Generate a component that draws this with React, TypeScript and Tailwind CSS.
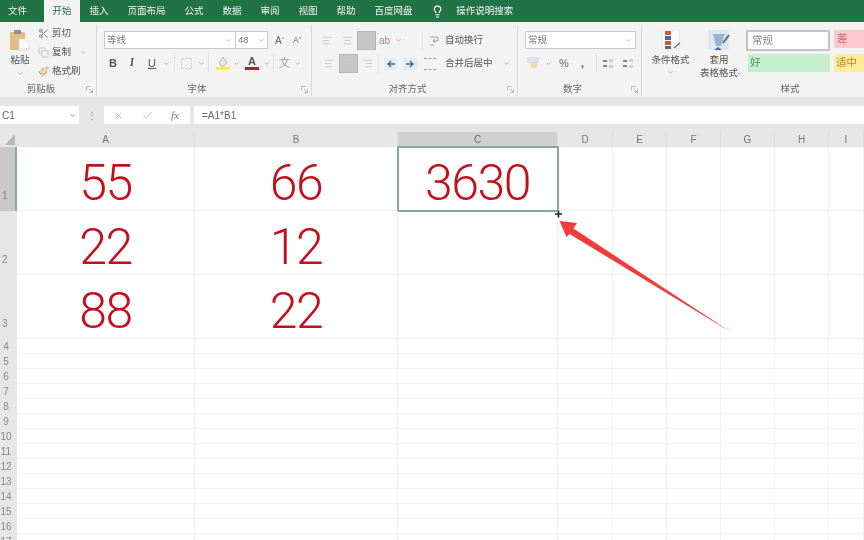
import { Scissors, Copy, Paintbrush, Lightbulb, X, Check, ChevronDown, AlignCenter, AlignLeft, AlignRight } from 'lucide-react';

const sans = "font-['Liberation_Sans','Noto_Sans_CJK_SC',sans-serif]";

const tabs = ['插入', '页面布局', '公式', '数据', '审阅', '视图', '帮助', '百度网盘'];
const columns = [
  { name: 'A', width: 'w-[178px]' },
  { name: 'B', width: 'w-[203px]' },
  { name: 'C', width: 'w-[160px]' },
  { name: 'D', width: 'w-[55px]' },
  { name: 'E', width: 'w-[54px]' },
  { name: 'F', width: 'w-[54px]' },
  { name: 'G', width: 'w-[54px]' },
  { name: 'H', width: 'w-[54px]' },
  { name: 'I', width: 'w-[35px]' },
];
const bigRows = [
  ['55', '66', '3630'],
  ['22', '12', ''],
  ['88', '22', ''],
];
const smallRows = [4, 5, 6, 7, 8, 9, 10, 11, 12, 13, 14, 15, 16, 17];

function Caret({ className = '' }: { className?: string }) {
  return <ChevronDown size={7} strokeWidth={2} className={`text-[#8a8a8a] shrink-0 ${className}`} />;
}

function Launcher() {
  return (
    <svg width="7" height="7" viewBox="0 0 7 7" className="absolute right-[3px] bottom-[3px]">
      <path d="M0.5 0.5h4M0.500 0.5v4M3 3l3.5 3.5M6.5 3.5v3h-3" stroke="#a6a6a6" strokeWidth="0.8" fill="none" />
    </svg>
  );
}

function Group({ label, width, children }: { label: string; width: string; children: React.ReactNode }) {
  return (
    <div className={`relative flex flex-col h-[71px] border-r border-[#d8d8d8] shrink-0 ${width}`}>
      <div className="flex-1 min-h-0">{children}</div>
      <div className="h-[14px] pr-[14px] text-center text-[9.5px] leading-[14px] text-[#666]">{label}</div>
      <Launcher />
    </div>
  );
}

function Sep() {
  return <div className="w-px h-[18px] bg-[#e0e0e0] shrink-0" />;
}

function LinesIcon({ selected = false, align = 'c' }: { selected?: boolean; align?: 'l' | 'c' | 'r' }) {
  const Icon = align === 'l' ? AlignLeft : align === 'r' ? AlignRight : AlignCenter;
  return (
    <div className={`w-[19px] h-[19px] flex items-center justify-center shrink-0 ${selected ? 'bg-[#c6c6c6] border border-[#b4b4b4]' : ''}`}>
      <Icon size={11} strokeWidth={2} className="text-[#c8c8c8]" />
    </div>
  );
}

function Ribbon() {
  return (
    <div className="flex h-[75px] pt-[3px] bg-[#f3f3f3] text-[#555] text-[9.5px]">
      <Group label="剪贴板" width="w-[97px]">
        <div className="flex pl-[8px] pt-px">
          <div className="w-[24px] flex flex-col items-center pt-[3px]">
            <svg width="22" height="22" viewBox="0 0 22 22">
              <rect x="1" y="3" width="15" height="18" rx="1" fill="#e2bd80" />
              <rect x="5" y="1" width="7" height="4" fill="#8d8d8d" />
              <path d="M10 10h6l4 4v7H10z" fill="#fafafa" stroke="#d2d2d2" strokeWidth="0.6" />
            </svg>
            <div className="leading-[14px] mt-[2px] text-[#555]">粘贴</div>
            <Caret className="mt-[3px]" />
          </div>
          <div className="ml-[6px] flex flex-col gap-[5px] leading-[14px]">
            <div className="flex items-center gap-[3px]"><Scissors size={11} className="text-[#6f7f99]" />剪切</div>
            <div className="flex items-center gap-[3px]"><Copy size={11} className="text-[#b5c6d8]" />复制<Caret className="ml-[6px]" /></div>
            <div className="flex items-center gap-[3px]"><Paintbrush size={11} className="text-[#d09a3c]" />格式刷</div>
          </div>
        </div>
      </Group>

      <Group label="字体" width="w-[215px]">
        <div className="flex items-center pl-[7px] pt-[6px]">
          <div className="w-[132px] h-[18px] bg-white border border-[#c8c8c8] flex items-center justify-between px-[2px] text-[#777]">等线<Caret className="mr-px" /></div>
          <div className="w-[32px] h-[18px] bg-white border border-l-0 border-[#c8c8c8] flex items-center justify-between px-[2px] text-[#777]">48<Caret /></div>
          <span className="ml-[7px] text-[10px] text-[#666]">A<sup className="text-[5px]">^</sup></span>
          <span className="ml-[9px] text-[8.5px] text-[#666]">A<sup className="text-[5px]">˅</sup></span>
        </div>
        <div className="flex items-center pl-[12px] mt-[5px] h-[18px]">
          <span className="w-[21px] text-[11px] font-bold text-[#555]">B</span>
          <span className="w-[18px] text-[11px] italic font-serif font-bold text-[#555]">I</span>
          <span className="w-[15px] text-[11px] underline text-[#555]">U</span>
          <Caret className="mr-[4px]" />
          <Sep />
          <div className="ml-[6px] w-[11px] h-[11px] border border-dashed border-[#d4d4d4] shrink-0" />
          <Caret className="ml-[6px] mr-[3px]" />
          <Sep />
          <div className="ml-[6px] w-[15px] flex flex-col items-center shrink-0">
            <svg width="12" height="10" viewBox="0 0 12 10"><path d="M6 0l4 6-3 3H4L2 6z" fill="#e4e4e4" stroke="#a9a9a9" strokeWidth="0.7" /></svg>
            <div className="w-[14px] h-[3px] bg-[#f6ee3c]" />
          </div>
          <Caret className="ml-[3px] mr-[5px]" />
          <div className="w-[14px] flex flex-col items-center shrink-0">
            <span className="text-[11px] leading-[11px] font-bold text-[#555]">A</span>
            <div className="w-[14px] h-[3px] bg-[#c8141e]" />
          </div>
          <Caret className="ml-[4px] mr-[3px]" />
          <Sep />
          <span className="ml-[5px] text-[11px] text-[#7fa3c4]">文</span>
          <Caret className="ml-[4px]" />
        </div>
      </Group>

      <Group label="对齐方式" width="w-[206px]">
        <div className="flex pt-[6px] h-[25px] items-center pl-[6px]">
          <LinesIcon align="l" />
          <div className="ml-px"><LinesIcon /></div>
          <LinesIcon selected />
          <span className="ml-[3px] w-[14px] text-[10px] text-[#a08a9a]">ab</span>
          <Caret className="ml-[2px]" />
          <div className="ml-[20px]"><Sep /></div>
          <svg className="ml-[6px]" width="11" height="12" viewBox="0 0 11 12"><path d="M1 2h8v4H4M4 6l2-2M4 6l2 2M1 10h4" stroke="#9a9a9a" fill="none" /></svg>
          <span className="ml-[5px] text-[#555]">自动换行</span>
        </div>
        <div className="flex mt-[4px] h-[19px] items-center pl-[8px]">
          <LinesIcon align="l" />
          <LinesIcon selected />
          <LinesIcon align="r" />
          <div className="ml-px"><Sep /></div>
          <svg className="ml-[5px]" width="14" height="12" viewBox="0 0 14 12"><rect width="14" height="12" fill="#e4edf5" /><path d="M11 6H4M7 3L4 6l3 3" stroke="#3a6a9c" strokeWidth="1.4" fill="none" /></svg>
          <svg className="ml-[5px]" width="14" height="12" viewBox="0 0 14 12"><rect width="14" height="12" fill="#e4edf5" /><path d="M3 6h7M7 3l3 3-3 3" stroke="#3a6a9c" strokeWidth="1.4" fill="none" /></svg>
          <div className="ml-[7px] shrink-0 w-[12px] h-[12px] border-y border-dashed border-[#9a9a9a]" />
          <span className="ml-[9px] text-[#555] whitespace-nowrap">合并后居中</span>
          <Caret className="ml-[10px]" />
        </div>
      </Group>

      <Group label="数字" width="w-[124px]">
        <div className="pl-[7px] pt-[6px]">
          <div className="w-[111px] h-[18px] bg-white border border-[#c8c8c8] flex items-center justify-between px-[2px] text-[#777]">常规<Caret className="mr-px" /></div>
        </div>
        <div className="flex items-center pl-[9px] mt-[5px] h-[18px]">
          <svg width="13" height="12" viewBox="0 0 13 12"><rect x="0" y="0" width="12" height="6" fill="#d7e5f2" /><circle cx="7" cy="8" r="3.5" fill="#efd6ae" /></svg>
          <Caret className="ml-[5px]" />
          <span className="ml-[7px] w-[16px] text-[11px] text-[#666]">%</span>
          <span className="ml-[6px] w-[15px] text-[11px] font-bold text-[#555]">,</span>
          <Sep />
          <svg className="ml-[5px]" width="12" height="11" viewBox="0 0 12 11"><path d="M1 3h4M1 8h4" stroke="#3a6a9c" strokeWidth="1.6" /><path d="M7 1h4v3H7zM7 7h4v3H7z" fill="#d0d0d0" /></svg>
          <svg className="ml-[8px]" width="12" height="11" viewBox="0 0 12 11"><path d="M1 3h4M1 8h4" stroke="#3a6a9c" strokeWidth="1.6" /><path d="M7 1h4v3H7zM7 7h4v3H7z" fill="#d0d0d0" /></svg>
        </div>
      </Group>

      <div className="relative flex-1 flex flex-col h-[71px] min-w-0 overflow-hidden">
        <div className="flex flex-1 min-h-0">
          <div className="w-[53px] ml-[2px] flex flex-col items-center pt-[5px] leading-[13px] shrink-0">
            <svg width="22" height="21" viewBox="0 0 22 21">
              <rect x="2" y="0" width="17" height="19" fill="#fafafa" stroke="#d8d8d8" strokeWidth="0.5" />
              <rect x="5" y="1" width="6" height="4" fill="#d4553a" />
              <rect x="5" y="6" width="6" height="4" fill="#3d6ea5" />
              <rect x="5" y="11" width="6" height="4" fill="#d4553a" />
              <rect x="5" y="16" width="6" height="3" fill="#3d6ea5" />
              <path d="M14 18l6-5" stroke="#666" strokeWidth="1.4" />
            </svg>
            <div className="mt-[2px] whitespace-nowrap">条件格式</div>
            <Caret className="mt-[3px]" />
          </div>
          <div className="w-[44px] flex flex-col items-center pt-[5px] leading-[13px] shrink-0">
            <svg width="22" height="21" viewBox="0 0 22 21">
              <rect x="1" y="0" width="19" height="19" fill="#dfe8f2" stroke="#d0d0d0" strokeWidth="0.5" />
              <path d="M5 4h12l-4 12H8z" fill="#9ab5d3" />
              <path d="M15 13l6-8" stroke="#666" strokeWidth="2" />
              <path d="M6 20l4-3 4 3z" fill="#3d6ea5" />
            </svg>
            <div className="mt-[2px]">套用</div>
            <div className="whitespace-nowrap">表格格式</div>
          </div>
          <Caret className="mt-[45px] ml-[-5px]" />
          <div className="ml-[3px] pt-[5px] flex flex-col gap-[3px] text-[10.5px]">
            <div className="flex gap-[4px]">
              <div className="w-[84px] h-[21px] bg-white border-2 border-[#c4c4c4] flex items-center pl-[4px] text-[#888]">常规</div>
              <div className="w-[40px] h-[18px] bg-[#ffc7ce] flex items-center pl-[3px] text-[#c86a70] shrink-0">差</div>
            </div>
            <div className="flex gap-[4px] pl-[2px]">
              <div className="w-[82px] h-[18px] bg-[#c6efce] flex items-center pl-[2px] text-[#4f9a5f]">好</div>
              <div className="w-[40px] h-[18px] bg-[#ffeb9c] flex items-center pl-[2px] text-[#b98a2c] shrink-0">适中</div>
            </div>
          </div>
        </div>
        <div className="h-[14px] pl-[74px] text-center text-[9.5px] leading-[14px] text-[#666]">样式</div>
      </div>
    </div>
  );
}

function FormulaBar() {
  return (
    <div className="h-[35px] bg-[#e6e6e6] pt-[9px]">
      <div className="flex h-[18px] text-[10px] text-[#666]">
        <div className="w-[79px] bg-white flex items-center justify-between pl-[2px] pr-[3px]">C1<Caret className="text-[#555]" /></div>
        <div className="w-[25px] flex items-center justify-center text-[#aaa] font-bold">⋮</div>
        <div className="w-[86px] bg-white flex items-center pl-[9px] gap-[18px] text-[#bbb]">
          <X size={11} />
          <Check size={11} />
          <span className="font-['Liberation_Serif',serif] italic text-[11px] text-[#777]">fx</span>
        </div>
        <div className="ml-[4px] flex-1 bg-white flex items-center pl-[8px]">=A1*B1</div>
      </div>
    </div>
  );
}

function Sheet() {
  return (
    <div className="relative bg-white">
      <div className="flex h-[15px] bg-[#e6e6e6] text-[10px] text-[#777]">
        <div className="w-[17px] shrink-0 flex items-end justify-end pb-[2px] pr-[2px]">
          <div className="w-[10px] h-[11px] bg-[#b9b9b9] [clip-path:polygon(100%_0,100%_100%,0_100%)]" />
        </div>
        {columns.map((c) => (
          <div key={c.name} className={`${c.width} shrink-0 flex items-center justify-center border-r border-[#dcdcdc] ${c.name === 'C' ? 'bg-[#cfcfcf] text-[#666]' : ''}`}>
            {c.name}
          </div>
        ))}
      </div>
      {bigRows.map((row, i) => (
        <div key={i} className="flex h-[64px]">
          <div className={`w-[17px] shrink-0 flex items-end pl-[2px] pb-[9px] text-[10px] leading-[12px] text-[#888] ${i === 0 ? 'bg-[#c8c8c8] border-r-2 border-[#8aa898]' : 'bg-[#e6e6e6]'}`}>
            {i + 1}
          </div>
          {columns.map((c, j) => (
            <div
              key={c.name}
              className={`${c.width} shrink-0 flex items-center justify-center pt-[10px] border-r border-b border-[#f0f0f0] font-['Roboto',sans-serif] font-light text-[50px] tracking-[-1.5px] text-[#c4101c] ${i === 0 && c.name === 'C' ? 'outline-2 -outline-offset-1 outline-[#8aa898]' : ''}`}
            >
              {row[j] ?? ''}
            </div>
          ))}
        </div>
      ))}
      {smallRows.map((n) => (
        <div key={n} className="flex h-[15px]">
          <div className="w-[17px] shrink-0 bg-[#e6e6e6] pr-[5px] text-center text-[10px] leading-[15px] text-[#888] whitespace-nowrap">{n}</div>
          {columns.map((c) => (
            <div key={c.name} className={`${c.width} shrink-0 border-r border-b border-[#f2f2f2]`} />
          ))}
        </div>
      ))}
      <svg className="absolute left-[540px] top-[70px]" width="200" height="140" viewBox="540 202 200 140">
        <path d="M555 214h7M558.5 210.500v7" stroke="#222" strokeWidth="1.6" />
        <polygon points="559.500,221 577,223 573.500,228.500 731.500,332.500 569.500,234 566.500,237" fill="#f23c3c" />
      </svg>
    </div>
  );
}

export default function App() {
  return (
    <div className={`w-[864px] h-[540px] overflow-hidden blur-[0.4px] ${sans}`}>
      <div className="flex h-[22px] bg-[#217346] text-[9.5px] leading-[22px] text-[#f2f2f2]">
        <div className="w-[44px] pl-[8px]">文件</div>
        <div className="w-[36px] bg-[#f3f3f3] text-center text-[#217346]">开始</div>
        {tabs.map((t) => (
          <div key={t} className="px-[9.5px] whitespace-nowrap">{t}</div>
        ))}
        <div className="flex items-center ml-[9px] gap-[12px]">
          <Lightbulb size={13} className="text-white" />
          <span>操作说明搜索</span>
        </div>
      </div>
      <Ribbon />
      <FormulaBar />
      <Sheet />
    </div>
  );
}
